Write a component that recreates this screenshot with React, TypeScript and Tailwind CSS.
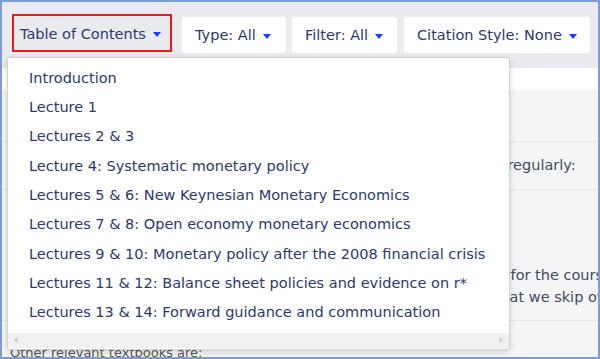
import { useState } from 'react'

const sections = [
  'Introduction',
  'Lecture 1',
  'Lectures 2 & 3',
  'Lecture 4: Systematic monetary policy',
  'Lectures 5 & 6: New Keynesian Monetary Economics',
  'Lectures 7 & 8: Open economy monetary economics',
  'Lectures 9 & 10: Monetary policy after the 2008 financial crisis',
  'Lectures 11 & 12: Balance sheet policies and evidence on r*',
  'Lectures 13 & 14: Forward guidance and communication',
]

function Caret() {
  return (
    <span className="inline-block w-0 h-0 ml-[7px] border-l-[4px] border-r-[4px] border-t-[5px] border-l-transparent border-r-transparent border-t-[#1b3cff]" />
  )
}

export default function App() {
  const [open, setOpen] = useState(true)

  return (
    <div className="w-[600px] h-[359px] relative overflow-hidden border-2 border-[#7d9bd6] bg-[#f4f5f7] font-['DejaVu_Sans',Verdana,sans-serif] text-[#2c3870]">
      {/* Toolbar */}
      <div className="h-[66px] bg-[#e9ebee] flex items-start pl-[10px] pt-[12px] text-[14.5px]">
        <button
          onClick={() => setOpen(!open)}
          className="h-[38px] w-[160px] border-2 border-[#e81a1f] flex items-center pl-[6px] pt-[3px]"
        >
          Table of Contents <Caret />
        </button>
        <button className="ml-[10px] mt-[3px] h-[36px] w-[104px] bg-white rounded-[3px] flex items-center pl-[13px] pt-[2px]">
          Type: All <Caret />
        </button>
        <button className="ml-[6px] mt-[3px] h-[36px] w-[105px] bg-white rounded-[3px] flex items-center pl-[13px] pt-[2px]">
          Filter: All <Caret />
        </button>
        <button className="ml-[7px] mt-[3px] h-[36px] w-[186px] bg-white rounded-[3px] flex items-center pl-[13px] pt-[2px]">
          Citation Style: None <Caret />
        </button>
      </div>

      {/* Page content behind the menu */}
      <div className="h-[22px] bg-white" />
      <div className="text-[14.5px] text-[#444a5a] whitespace-nowrap">
        <div className="h-[52px] border-b border-[#e3e5e8]" />
        <div className="h-[48px] border-b border-[#e3e5e8] flex items-center pl-[140px]">
          The following papers and chapters are referred to regularly:
        </div>
        <div className="h-[131px] border-b border-[#e3e5e8] pt-[74px] leading-[22px]">
          <div className="pl-[234px]">Most lectures have required readings for the course and</div>
          <div className="pl-[275px]">further articles; it is assumed that we skip over details</div>
        </div>
        <div className="pl-[8px] pt-[22px] text-[13px] text-[#555]">Other relevant textbooks are:</div>
      </div>

      {/* Dropdown */}
      {open && (
        <div className="absolute left-[5px] top-[55px] w-[503px] h-[293px] bg-white border border-[#cfd2d6] rounded-[3px] shadow-[0_2px_6px_rgba(0,0,0,0.15)] flex flex-col">
          <ul className="flex-1 pt-[6px] pl-[21px] text-[14.5px]">
            {sections.map((s) => (
              <li key={s} className="h-[29.3px] flex items-center whitespace-nowrap">
                {s}
              </li>
            ))}
          </ul>
          <div className="h-[15px] mb-[1px] bg-[#f1f1f1] flex items-center justify-between px-[6px] text-[11px] text-[#a3a3a3]">
            <span>&lsaquo;</span>
            <span>&rsaquo;</span>
          </div>
        </div>
      )}
    </div>
  )
}
